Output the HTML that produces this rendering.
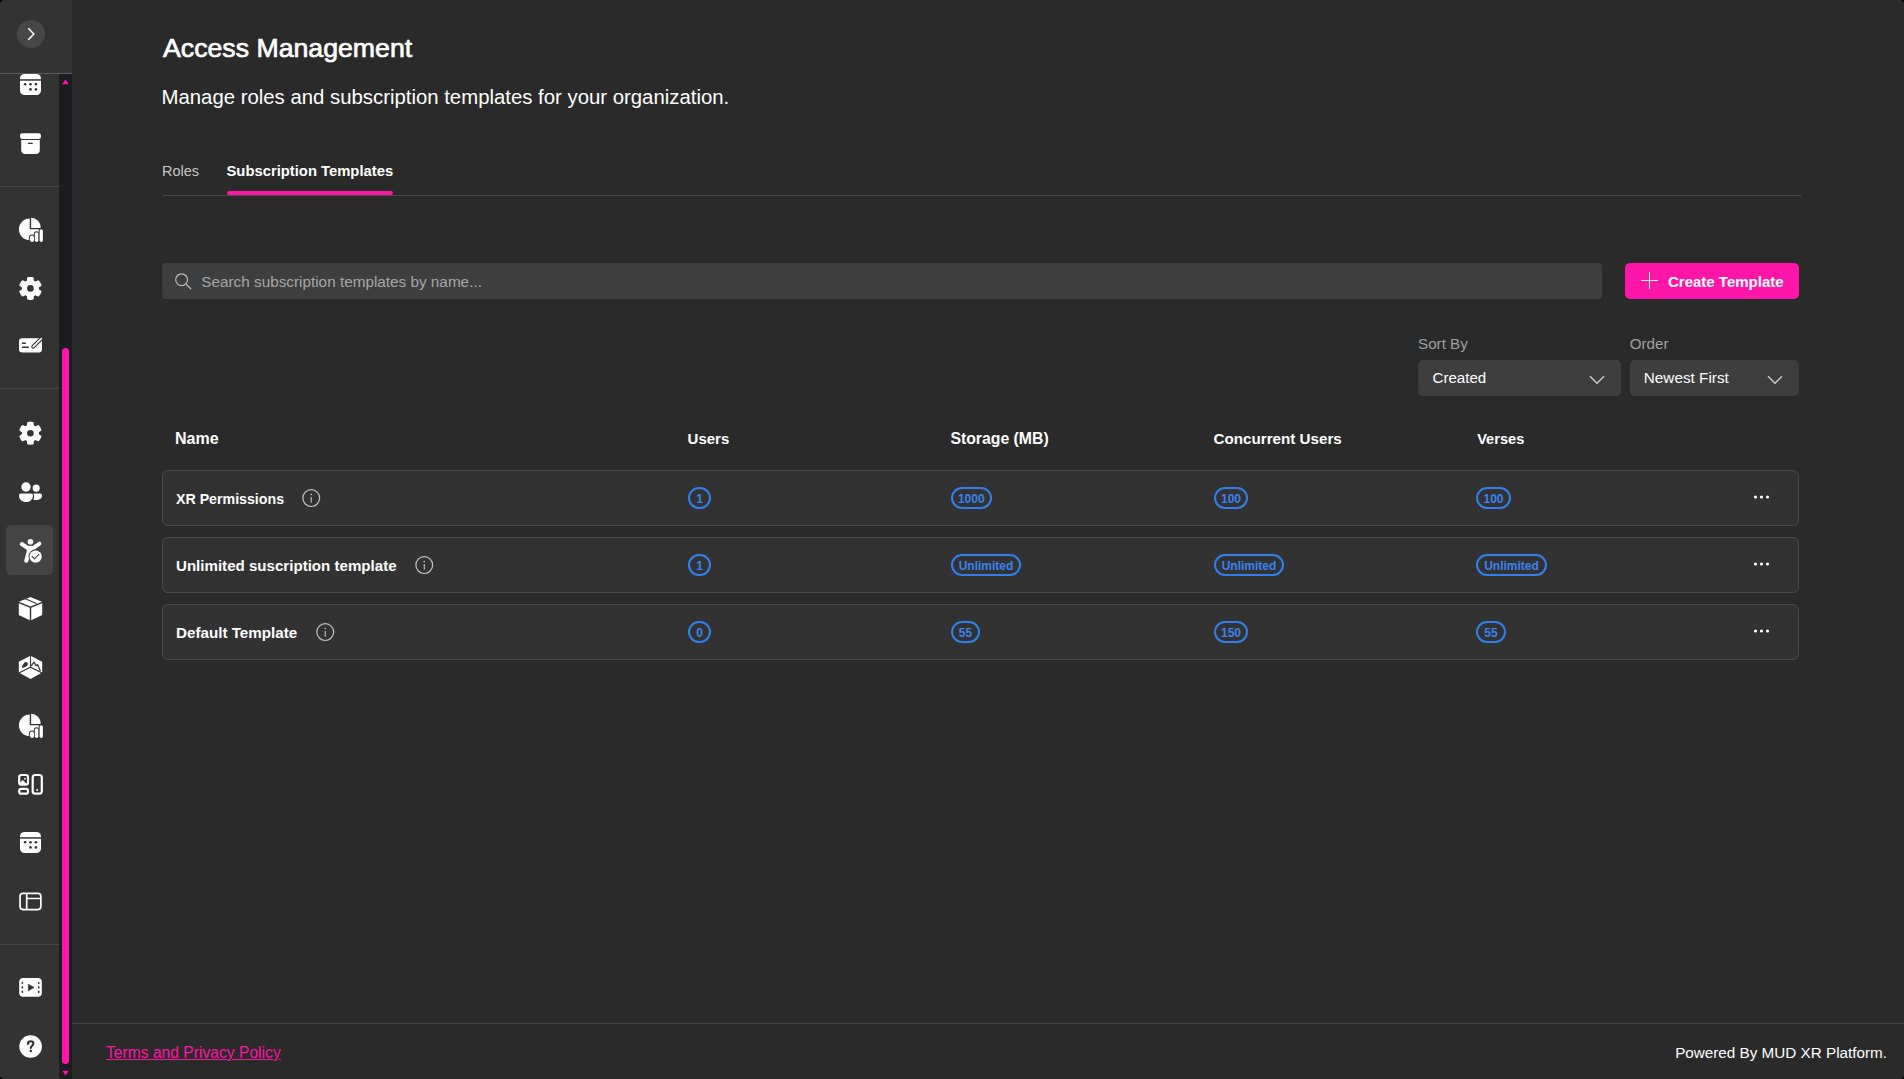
<!DOCTYPE html>
<html><head><meta charset="utf-8">
<style>
*{box-sizing:border-box;margin:0;padding:0}
html,body{width:1904px;height:1079px;overflow:hidden;background:#2a2a2a;font-family:"Liberation Sans",sans-serif;color:#fff}
.t{position:absolute;line-height:1;white-space:nowrap}
.b{font-weight:bold}
.sb{position:absolute;left:0;top:0;width:72px;height:1079px;background:#333333}
.sbline{position:absolute;left:0;top:73px;width:72px;height:1px;background:#5c5c5c}
.track{position:absolute;left:59px;top:74px;width:13px;height:1005px;background:#1c1d21}
.thumb{position:absolute;left:62px;top:348px;width:7px;height:716px;border-radius:3.5px;background:#ff15a8}
.sep{position:absolute;left:0;width:59px;height:1px;background:#474747}
.tabs{position:absolute;left:163px;top:195px;width:1638px;height:1px;background:#4a4a4a}
.uline{position:absolute;left:227px;top:191px;width:166px;height:4px;border-radius:2px;background:#ff15a8}
.search{position:absolute;left:162px;top:263px;width:1440px;height:36px;border-radius:4px;background:#3e3e3e}
.btn{position:absolute;left:1625px;top:263px;width:174px;height:36px;border-radius:5px;background:#ff15a8}
.sel{position:absolute;top:360px;height:36px;border-radius:5px;background:#3e3e3e}
.row{position:absolute;left:162px;width:1637px;height:56px;border:1px solid #4a4a4a;border-radius:6px;background:#323232}
.bd{position:absolute;height:22px;border:2px solid #2f80ed;border-radius:11px;color:#3b82f0;font-size:12px;font-weight:bold;text-align:center;line-height:20px;font-family:"Liberation Sans",sans-serif}
.footer{position:absolute;left:72px;top:1023px;width:1832px;height:1px;background:#454545}
</style></head><body>
<div class="sb"></div>
<div class="sbline"></div>
<div class="track"></div>
<div class="thumb"></div>
<div class="sep" style="top:186px"></div>
<div class="sep" style="top:388px"></div>
<div class="sep" style="top:944px"></div>
<svg width="72" height="1079" viewBox="0 0 72 1079" style="position:absolute;left:0;top:0">
<circle cx="31" cy="34" r="14" fill="#474747"/>
<path d="M28.3,28.3 L33.8,34 L28.3,39.7" fill="none" stroke="#fff" stroke-width="1.5"/>
<g>
<rect x="20" y="74" width="21" height="21" rx="4.5" fill="#fff"/>
<rect x="20" y="79.2" width="21" height="1.5" fill="#333333"/>
<circle cx="25.1" cy="84.2" r="1.3" fill="#333333"/><circle cx="30.5" cy="84.2" r="1.3" fill="#333333"/><circle cx="35.9" cy="84.2" r="1.3" fill="#333333"/>
<circle cx="30.5" cy="89.4" r="1.3" fill="#333333"/><circle cx="35.9" cy="89.4" r="1.3" fill="#333333"/>
</g>
<rect x="20.1" y="133.3" width="20.8" height="5.7" rx="2" fill="#fff"/>
<path d="M21.2,140 H39.8 V150 A4,4 0 0 1 35.8,154 H25.2 A4,4 0 0 1 21.2,150Z" fill="#fff"/>
<rect x="27.9" y="142.7" width="5" height="1.3" rx="0.65" fill="#333333"/>
<g transform="translate(0,0)">
<path d="M29.7,218.5 L29.7,229.3 L40.5,229.3 A10.8,10.8 0 1 1 29.7,218.5Z" fill="#fff"/>
<path d="M31.1,217.8 A9.6,9.6 0 0 1 40.7,227.9 L31.1,227.9Z" fill="#fff"/>
<rect x="28.9" y="234.6" width="6.1" height="8.3" rx="3" fill="#333333"/>
<rect x="33.8" y="231.2" width="5.5" height="11.7" rx="2.7" fill="#333333"/>
<rect x="38.6" y="228.3" width="5.3" height="14.6" rx="2.6" fill="#333333"/>
<rect x="29.9" y="235.6" width="4.1" height="6.3" rx="2" fill="#fff"/>
<rect x="34.8" y="232.2" width="3.5" height="9.7" rx="1.75" fill="#fff"/>
<rect x="39.6" y="229.3" width="3.3" height="12.6" rx="1.65" fill="#fff"/>
</g>
<g transform="translate(30.4,288.4)"><path d="M8.5,0.0 8.5,-0.3 8.5,-0.6 8.5,-0.9 8.9,-1.3 9.6,-1.7 10.4,-2.2 10.9,-2.7 11.1,-3.2 10.9,-3.6 10.8,-3.9 10.7,-4.3 10.5,-4.7 10.3,-5.0 10.2,-5.4 10.0,-5.7 9.8,-6.1 9.5,-6.4 9.3,-6.8 9.1,-7.1 8.8,-7.4 8.5,-7.7 8.3,-8.0 7.8,-8.1 7.1,-7.9 6.3,-7.5 5.6,-7.1 5.0,-6.9 4.8,-7.0 4.5,-7.2 4.3,-7.4 4.0,-7.5 3.7,-7.6 3.5,-7.8 3.4,-8.4 3.3,-9.2 3.3,-10.1 3.1,-10.8 2.8,-11.2 2.4,-11.2 2.0,-11.3 1.6,-11.4 1.2,-11.4 0.8,-11.5 0.4,-11.5 0.0,-11.5 -0.4,-11.5 -0.8,-11.5 -1.2,-11.4 -1.6,-11.4 -2.0,-11.3 -2.4,-11.2 -2.8,-11.2 -3.1,-10.8 -3.3,-10.1 -3.3,-9.2 -3.4,-8.4 -3.5,-7.8 -3.7,-7.6 -4.0,-7.5 -4.2,-7.4 -4.5,-7.2 -4.8,-7.0 -5.0,-6.9 -5.6,-7.1 -6.3,-7.5 -7.1,-7.9 -7.8,-8.1 -8.3,-8.0 -8.5,-7.7 -8.8,-7.4 -9.1,-7.1 -9.3,-6.8 -9.5,-6.4 -9.8,-6.1 -10.0,-5.7 -10.2,-5.4 -10.3,-5.0 -10.5,-4.7 -10.7,-4.3 -10.8,-3.9 -10.9,-3.6 -11.1,-3.2 -10.9,-2.7 -10.4,-2.2 -9.6,-1.7 -8.9,-1.3 -8.5,-0.9 -8.5,-0.6 -8.5,-0.3 -8.5,-0.0 -8.5,0.3 -8.5,0.6 -8.5,0.9 -8.9,1.3 -9.6,1.7 -10.4,2.2 -10.9,2.7 -11.1,3.2 -10.9,3.6 -10.8,3.9 -10.7,4.3 -10.5,4.7 -10.3,5.0 -10.2,5.4 -10.0,5.8 -9.8,6.1 -9.5,6.4 -9.3,6.8 -9.1,7.1 -8.8,7.4 -8.5,7.7 -8.3,8.0 -7.8,8.1 -7.1,7.9 -6.3,7.5 -5.6,7.1 -5.0,6.9 -4.8,7.0 -4.5,7.2 -4.3,7.4 -4.0,7.5 -3.7,7.6 -3.5,7.8 -3.4,8.4 -3.3,9.2 -3.3,10.1 -3.1,10.8 -2.8,11.2 -2.4,11.2 -2.0,11.3 -1.6,11.4 -1.2,11.4 -0.8,11.5 -0.4,11.5 -0.0,11.5 0.4,11.5 0.8,11.5 1.2,11.4 1.6,11.4 2.0,11.3 2.4,11.2 2.8,11.2 3.1,10.8 3.3,10.1 3.3,9.2 3.4,8.4 3.5,7.8 3.7,7.6 4.0,7.5 4.3,7.4 4.5,7.2 4.8,7.0 5.0,6.9 5.6,7.1 6.3,7.5 7.1,7.9 7.8,8.1 8.3,8.0 8.5,7.7 8.8,7.4 9.1,7.1 9.3,6.8 9.5,6.4 9.8,6.1 10.0,5.8 10.2,5.4 10.3,5.0 10.5,4.7 10.7,4.3 10.8,3.9 10.9,3.6 11.1,3.2 10.9,2.7 10.4,2.2 9.6,1.7 8.9,1.3 8.5,0.9 8.5,0.6 8.5,0.3Z" fill="#fff"/><circle cx="0" cy="0" r="3.3" fill="#333333"/></g>
<rect x="19" y="338.2" width="23" height="14.3" rx="3.2" fill="#fff"/>
<rect x="21.8" y="342.6" width="4.2" height="1.4" rx="0.7" fill="#333333"/>
<rect x="21.8" y="346.6" width="7.2" height="1.4" rx="0.7" fill="#333333"/>
<path d="M33.2,346.6 L41.3,338.6" stroke="#333333" stroke-width="4" stroke-linecap="round"/>
<path d="M33.2,346.6 L41.3,338.6" stroke="#fff" stroke-width="1.8" stroke-linecap="round"/>
<g transform="translate(30.4,433.2)"><path d="M8.5,0.0 8.5,-0.3 8.5,-0.6 8.5,-0.9 8.9,-1.3 9.6,-1.7 10.4,-2.2 10.9,-2.7 11.1,-3.2 10.9,-3.6 10.8,-3.9 10.7,-4.3 10.5,-4.7 10.3,-5.0 10.2,-5.4 10.0,-5.7 9.8,-6.1 9.5,-6.4 9.3,-6.8 9.1,-7.1 8.8,-7.4 8.5,-7.7 8.3,-8.0 7.8,-8.1 7.1,-7.9 6.3,-7.5 5.6,-7.1 5.0,-6.9 4.8,-7.0 4.5,-7.2 4.3,-7.4 4.0,-7.5 3.7,-7.6 3.5,-7.8 3.4,-8.4 3.3,-9.2 3.3,-10.1 3.1,-10.8 2.8,-11.2 2.4,-11.2 2.0,-11.3 1.6,-11.4 1.2,-11.4 0.8,-11.5 0.4,-11.5 0.0,-11.5 -0.4,-11.5 -0.8,-11.5 -1.2,-11.4 -1.6,-11.4 -2.0,-11.3 -2.4,-11.2 -2.8,-11.2 -3.1,-10.8 -3.3,-10.1 -3.3,-9.2 -3.4,-8.4 -3.5,-7.8 -3.7,-7.6 -4.0,-7.5 -4.2,-7.4 -4.5,-7.2 -4.8,-7.0 -5.0,-6.9 -5.6,-7.1 -6.3,-7.5 -7.1,-7.9 -7.8,-8.1 -8.3,-8.0 -8.5,-7.7 -8.8,-7.4 -9.1,-7.1 -9.3,-6.8 -9.5,-6.4 -9.8,-6.1 -10.0,-5.7 -10.2,-5.4 -10.3,-5.0 -10.5,-4.7 -10.7,-4.3 -10.8,-3.9 -10.9,-3.6 -11.1,-3.2 -10.9,-2.7 -10.4,-2.2 -9.6,-1.7 -8.9,-1.3 -8.5,-0.9 -8.5,-0.6 -8.5,-0.3 -8.5,-0.0 -8.5,0.3 -8.5,0.6 -8.5,0.9 -8.9,1.3 -9.6,1.7 -10.4,2.2 -10.9,2.7 -11.1,3.2 -10.9,3.6 -10.8,3.9 -10.7,4.3 -10.5,4.7 -10.3,5.0 -10.2,5.4 -10.0,5.8 -9.8,6.1 -9.5,6.4 -9.3,6.8 -9.1,7.1 -8.8,7.4 -8.5,7.7 -8.3,8.0 -7.8,8.1 -7.1,7.9 -6.3,7.5 -5.6,7.1 -5.0,6.9 -4.8,7.0 -4.5,7.2 -4.3,7.4 -4.0,7.5 -3.7,7.6 -3.5,7.8 -3.4,8.4 -3.3,9.2 -3.3,10.1 -3.1,10.8 -2.8,11.2 -2.4,11.2 -2.0,11.3 -1.6,11.4 -1.2,11.4 -0.8,11.5 -0.4,11.5 -0.0,11.5 0.4,11.5 0.8,11.5 1.2,11.4 1.6,11.4 2.0,11.3 2.4,11.2 2.8,11.2 3.1,10.8 3.3,10.1 3.3,9.2 3.4,8.4 3.5,7.8 3.7,7.6 4.0,7.5 4.3,7.4 4.5,7.2 4.8,7.0 5.0,6.9 5.6,7.1 6.3,7.5 7.1,7.9 7.8,8.1 8.3,8.0 8.5,7.7 8.8,7.4 9.1,7.1 9.3,6.8 9.5,6.4 9.8,6.1 10.0,5.8 10.2,5.4 10.3,5.0 10.5,4.7 10.7,4.3 10.8,3.9 10.9,3.6 11.1,3.2 10.9,2.7 10.4,2.2 9.6,1.7 8.9,1.3 8.5,0.9 8.5,0.6 8.5,0.3Z" fill="#fff"/><circle cx="0" cy="0" r="3.3" fill="#333333"/></g>
<circle cx="26" cy="487" r="4.7" fill="#fff"/>
<circle cx="36.2" cy="488.1" r="3.6" fill="#fff"/>
<path d="M19,495.5 A2,2 0 0 1 21,493.5 H31 A2,2 0 0 1 33,495.5 C33,499.5 30,502 26,502 C22,502 19,499.5 19,495.5Z" fill="#fff"/>
<path d="M33.4,493.5 H40 A2,2 0 0 1 42,495.5 C42,498.5 39.5,500 36,500 H33.4 C34.4,498 34.4,495.5 33.4,493.5Z" fill="#fff"/>
<rect x="6" y="525" width="47" height="50" rx="5" fill="#444444"/>
<path d="M21.8,544 L27.5,547.8 L33.5,547.8 L39.4,543.7" fill="none" stroke="#fff" stroke-width="4" stroke-linecap="round" stroke-linejoin="round"/>
<circle cx="30.4" cy="541.7" r="3.7" fill="#444444"/><circle cx="30.4" cy="541.7" r="2.8" fill="#fff"/>
<path d="M26.8,547 L34,547 L30.5,553.5 L28.4,561 A2,2 0 0 1 24.3,560.2 L26.8,551Z" fill="#fff"/>
<circle cx="35.6" cy="556.6" r="7.1" fill="#444444"/>
<circle cx="35.6" cy="556.6" r="6.1" fill="#fff"/>
<path d="M32.2,556.5 L34.5,558.8 L38.8,554.3" fill="none" stroke="#444444" stroke-width="1.2" stroke-linecap="round" stroke-linejoin="round"/>
<path d="M30.4,596.9 L42,601.8 L30.5,606.6 L18.9,601.8Z" fill="#fff"/>
<path d="M24.6,598.6 L36.4,603.6" stroke="#333333" stroke-width="1.1"/>
<path d="M18.8,603.2 L29.8,607.8 L29.8,620.2 L18.8,615Z" fill="#fff"/>
<path d="M42.2,603.2 L31.2,607.8 L31.2,620.2 L42.2,615Z" fill="#fff"/>
<path d="M30.5,655.8 L42.2,661.8 L42.2,672.6 L30.5,679 L18.8,672.6 L18.8,661.8Z" fill="#fff"/>
<path d="M30.5,655.8 L30.5,667.2 M18.8,673 L30.5,667.2 L42.2,673" fill="none" stroke="#333333" stroke-width="1.1"/>
<path d="M22.3,667.6 C21.7,666.4 22.8,665 23.4,664.1 C24.2,662.2 26.4,661.4 27.5,662.8 C28.4,664.2 27.3,666.4 25.3,666.9 C24.1,667.3 23,668.3 22.3,667.6Z" fill="#333333"/>
<path d="M31.2,665.8 L33.9,662.2 L36.3,665.8 L37.6,664.4 L40.4,671" fill="none" stroke="#333333" stroke-width="1.2" stroke-linejoin="round"/>
<g transform="translate(0,496)">
<path d="M29.7,218.5 L29.7,229.3 L40.5,229.3 A10.8,10.8 0 1 1 29.7,218.5Z" fill="#fff"/>
<path d="M31.1,217.8 A9.6,9.6 0 0 1 40.7,227.9 L31.1,227.9Z" fill="#fff"/>
<rect x="28.9" y="234.6" width="6.1" height="8.3" rx="3" fill="#333333"/>
<rect x="33.8" y="231.2" width="5.5" height="11.7" rx="2.7" fill="#333333"/>
<rect x="38.6" y="228.3" width="5.3" height="14.6" rx="2.6" fill="#333333"/>
<rect x="29.9" y="235.6" width="4.1" height="6.3" rx="2" fill="#fff"/>
<rect x="34.8" y="232.2" width="3.5" height="9.7" rx="1.75" fill="#fff"/>
<rect x="39.6" y="229.3" width="3.3" height="12.6" rx="1.65" fill="#fff"/>
</g>
<rect x="19.2" y="775" width="8.8" height="9.7" rx="2.2" fill="none" stroke="#fff" stroke-width="2.2"/>
<path d="M20.2,784 V782.4 L22.7,779.9 L26.4,783.5 V784Z" fill="#fff"/>
<circle cx="25" cy="778.7" r="0.9" fill="#fff"/>
<rect x="19.2" y="788.8" width="8.8" height="4.9" rx="2" fill="none" stroke="#fff" stroke-width="2.2"/>
<rect x="32.7" y="775" width="9.1" height="18.7" rx="2.4" fill="none" stroke="#fff" stroke-width="2.2"/>
<circle cx="37.2" cy="790" r="1" fill="#fff"/>
<g>
<rect x="20" y="832" width="21" height="21" rx="4.5" fill="#fff"/>
<rect x="20" y="837.2" width="21" height="1.5" fill="#333333"/>
<circle cx="25.1" cy="842.2" r="1.3" fill="#333333"/><circle cx="30.5" cy="842.2" r="1.3" fill="#333333"/><circle cx="35.9" cy="842.2" r="1.3" fill="#333333"/>
<circle cx="30.5" cy="847.4" r="1.3" fill="#333333"/><circle cx="35.9" cy="847.4" r="1.3" fill="#333333"/>
</g>
<rect x="20.05" y="893.35" width="20.8" height="16.2" rx="3" fill="none" stroke="#fff" stroke-width="1.7"/>
<path d="M26.7,893.4 V909.5 M26.7,898.5 H40.9" stroke="#fff" stroke-width="1.7" fill="none"/>
<rect x="19.2" y="977.9" width="22.6" height="18.8" rx="3.8" fill="#fff"/>
<rect x="21.5" y="981.9" width="1.7" height="2.2" rx="0.8" fill="#333333"/><rect x="21.5" y="986.3" width="1.7" height="2.2" rx="0.8" fill="#333333"/><rect x="21.5" y="990.8" width="1.7" height="2.2" rx="0.8" fill="#333333"/>
<rect x="37.9" y="981.9" width="1.7" height="2.2" rx="0.8" fill="#333333"/><rect x="37.9" y="986.3" width="1.7" height="2.2" rx="0.8" fill="#333333"/><rect x="37.9" y="990.8" width="1.7" height="2.2" rx="0.8" fill="#333333"/>
<path d="M28.3,984.2 L34,987.4 L28.3,990.8Z" fill="#333333" stroke="#333333" stroke-width="0.6" stroke-linejoin="round"/>
<circle cx="30.6" cy="1046.5" r="11.3" fill="#fff"/>
<path d="M27.9,1043.9 C27.9,1042.2 29.1,1041.3 30.7,1041.3 C32.3,1041.3 33.4,1042.3 33.4,1043.6 C33.4,1045.6 30.8,1045.9 30.8,1047.9" fill="none" stroke="#333333" stroke-width="2.1" stroke-linecap="round"/>
<circle cx="30.8" cy="1051.1" r="1.25" fill="#333333"/>
<path d="M62.3,84.3 L65.5,79.5 L68.7,84.3Z" fill="#ff15a8"/>
<path d="M62.3,1070.8 L65.5,1075.6 L68.7,1070.8Z" fill="#ff15a8"/>
</svg>
<div class="t" style="left:163px;top:34.7px;font-size:26.7px;-webkit-text-stroke:0.7px #fff">Access Management</div>
<div class="t" style="left:161.5px;top:86.8px;font-size:20.35px">Manage roles and subscription templates for your organization.</div>
<div class="t" style="left:162px;top:163.9px;font-size:14.5px;color:#c4c4c4">Roles</div>
<div class="t b" style="left:226.5px;top:163.6px;font-size:14.8px">Subscription Templates</div>
<div class="tabs"></div>
<div class="uline"></div>
<div class="search"></div>
<svg width="20" height="20" viewBox="0 0 20 20" style="position:absolute;left:172px;top:270px"><circle cx="9.6" cy="9.7" r="5.9" fill="none" stroke="#bdbdbd" stroke-width="1.2"/><path d="M13.9,14 L18.8,18.8" stroke="#bdbdbd" stroke-width="1.2" stroke-linecap="round"/></svg>
<div class="t" style="left:201.3px;top:273.7px;font-size:15.3px;color:#a6a6a6">Search subscription templates by name...</div>
<div class="btn"></div>
<div style="position:absolute;left:1649px;top:272px;width:1px;height:17px;background:#fff"></div><div style="position:absolute;left:1641px;top:280px;width:17px;height:1px;background:#fff"></div>
<div class="t b" style="left:1668px;top:274.4px;font-size:15px">Create Template</div>
<div class="t" style="left:1418px;top:336px;font-size:15.2px;color:#a0a0a0">Sort By</div>
<div class="t" style="left:1629.7px;top:336px;font-size:15.2px;color:#a0a0a0">Order</div>
<div class="sel" style="left:1418px;width:203px"></div>
<div class="sel" style="left:1630px;width:169px"></div>
<div class="t" style="left:1432.5px;top:370.3px;font-size:15.1px">Created</div>
<div class="t" style="left:1643.8px;top:370.3px;font-size:15.3px">Newest First</div>
<svg width="16" height="10" viewBox="0 0 16 10" style="position:absolute;left:1589px;top:374.5px"><path d="M1,1.2 L8,8.3 L15,1.2" fill="none" stroke="#d0d0d0" stroke-width="1.3"/></svg>
<svg width="16" height="10" viewBox="0 0 16 10" style="position:absolute;left:1767px;top:374.5px"><path d="M1,1.2 L8,8.3 L15,1.2" fill="none" stroke="#d0d0d0" stroke-width="1.3"/></svg>
<div class="t b" style="left:175px;top:430.5px;font-size:16px">Name</div>
<div class="t b" style="left:687.6px;top:431.3px;font-size:15px">Users</div>
<div class="t b" style="left:950.4px;top:430.8px;font-size:15.8px">Storage (MB)</div>
<div class="t b" style="left:1213.5px;top:431.2px;font-size:15.2px">Concurrent Users</div>
<div class="t b" style="left:1477.2px;top:431.6px;font-size:14.6px">Verses</div>
<div class="row" style="top:470px"></div>
<div class="t b" style="left:176px;top:491.8px;font-size:14.2px">XR Permissions</div>
<svg width="20" height="20" viewBox="0 0 20 20" style="position:absolute;left:301px;top:488px"><circle cx="10.25" cy="10.1" r="8.4" fill="none" stroke="#c4c4c4" stroke-width="1.2"/><circle cx="10.25" cy="6.5" r="0.8" fill="#c8c8c8"/><path d="M10.25,9 V14.8" stroke="#c4c4c4" stroke-width="1.1"/></svg>
<div class="bd" style="left:688px;top:487px;width:23px">1</div>
<div class="bd" style="left:951px;top:487px;width:40.5px">1000</div>
<div class="bd" style="left:1214px;top:487px;width:34px">100</div>
<div class="bd" style="left:1476px;top:487px;width:35px">100</div>
<svg width="20" height="8" viewBox="0 0 20 8" style="position:absolute;left:1751px;top:493px"><circle cx="4.5" cy="4" r="1.6" fill="#fff"/><circle cx="10.5" cy="4" r="1.6" fill="#fff"/><circle cx="16.5" cy="4" r="1.6" fill="#fff"/></svg>
<div class="row" style="top:537px"></div>
<div class="t b" style="left:176px;top:558.0px;font-size:15.1px">Unlimited suscription template</div>
<svg width="20" height="20" viewBox="0 0 20 20" style="position:absolute;left:414px;top:555px"><circle cx="10.25" cy="10.1" r="8.4" fill="none" stroke="#c4c4c4" stroke-width="1.2"/><circle cx="10.25" cy="6.5" r="0.8" fill="#c8c8c8"/><path d="M10.25,9 V14.8" stroke="#c4c4c4" stroke-width="1.1"/></svg>
<div class="bd" style="left:688px;top:554px;width:23px">1</div>
<div class="bd" style="left:951px;top:554px;width:70px">Unlimited</div>
<div class="bd" style="left:1214px;top:554px;width:70px">Unlimited</div>
<div class="bd" style="left:1476px;top:554px;width:71px">Unlimited</div>
<svg width="20" height="8" viewBox="0 0 20 8" style="position:absolute;left:1751px;top:560px"><circle cx="4.5" cy="4" r="1.6" fill="#fff"/><circle cx="10.5" cy="4" r="1.6" fill="#fff"/><circle cx="16.5" cy="4" r="1.6" fill="#fff"/></svg>
<div class="row" style="top:604px"></div>
<div class="t b" style="left:176px;top:624.9px;font-size:15.2px">Default Template</div>
<svg width="20" height="20" viewBox="0 0 20 20" style="position:absolute;left:315px;top:622px"><circle cx="10.25" cy="10.1" r="8.4" fill="none" stroke="#c4c4c4" stroke-width="1.2"/><circle cx="10.25" cy="6.5" r="0.8" fill="#c8c8c8"/><path d="M10.25,9 V14.8" stroke="#c4c4c4" stroke-width="1.1"/></svg>
<div class="bd" style="left:688px;top:621px;width:23px">0</div>
<div class="bd" style="left:951px;top:621px;width:29px">55</div>
<div class="bd" style="left:1214px;top:621px;width:34px">150</div>
<div class="bd" style="left:1476px;top:621px;width:30px">55</div>
<svg width="20" height="8" viewBox="0 0 20 8" style="position:absolute;left:1751px;top:627px"><circle cx="4.5" cy="4" r="1.6" fill="#fff"/><circle cx="10.5" cy="4" r="1.6" fill="#fff"/><circle cx="16.5" cy="4" r="1.6" fill="#fff"/></svg>
<div class="footer"></div>
<div class="t" style="left:106px;top:1044.8px;font-size:15.65px;color:#ff15a8;text-decoration:underline">Terms and Privacy Policy</div>
<div class="t" style="right:17px;top:1044.9px;font-size:15.25px">Powered By MUD XR Platform.</div>
<svg width="1904" height="1079" viewBox="0 0 1904 1079" style="position:absolute;left:0;top:0;pointer-events:none"><rect x="0" y="0" width="1" height="1" fill="#000" fill-opacity="1"/><rect x="1" y="0" width="1" height="1" fill="#000" fill-opacity="1"/><rect x="0" y="1" width="1" height="1" fill="#000" fill-opacity="1"/><rect x="1" y="1" width="1" height="1" fill="#000" fill-opacity="0.55"/><rect x="2" y="0" width="1" height="1" fill="#000" fill-opacity="0.35"/><rect x="0" y="2" width="1" height="1" fill="#000" fill-opacity="0.35"/><rect x="1903" y="0" width="1" height="1" fill="#000" fill-opacity="1"/><rect x="1902" y="0" width="1" height="1" fill="#000" fill-opacity="1"/><rect x="1903" y="1" width="1" height="1" fill="#000" fill-opacity="1"/><rect x="1902" y="1" width="1" height="1" fill="#000" fill-opacity="0.55"/><rect x="1901" y="0" width="1" height="1" fill="#000" fill-opacity="0.35"/><rect x="1903" y="2" width="1" height="1" fill="#000" fill-opacity="0.35"/><rect x="0" y="1078" width="1" height="1" fill="#000" fill-opacity="1"/><rect x="1" y="1078" width="1" height="1" fill="#000" fill-opacity="1"/><rect x="0" y="1077" width="1" height="1" fill="#000" fill-opacity="1"/><rect x="1" y="1077" width="1" height="1" fill="#000" fill-opacity="0.55"/><rect x="2" y="1078" width="1" height="1" fill="#000" fill-opacity="0.35"/><rect x="0" y="1076" width="1" height="1" fill="#000" fill-opacity="0.35"/><rect x="1903" y="1078" width="1" height="1" fill="#000" fill-opacity="1"/><rect x="1902" y="1078" width="1" height="1" fill="#000" fill-opacity="1"/><rect x="1903" y="1077" width="1" height="1" fill="#000" fill-opacity="1"/><rect x="1902" y="1077" width="1" height="1" fill="#000" fill-opacity="0.55"/><rect x="1901" y="1078" width="1" height="1" fill="#000" fill-opacity="0.35"/><rect x="1903" y="1076" width="1" height="1" fill="#000" fill-opacity="0.35"/></svg>
</body></html>
